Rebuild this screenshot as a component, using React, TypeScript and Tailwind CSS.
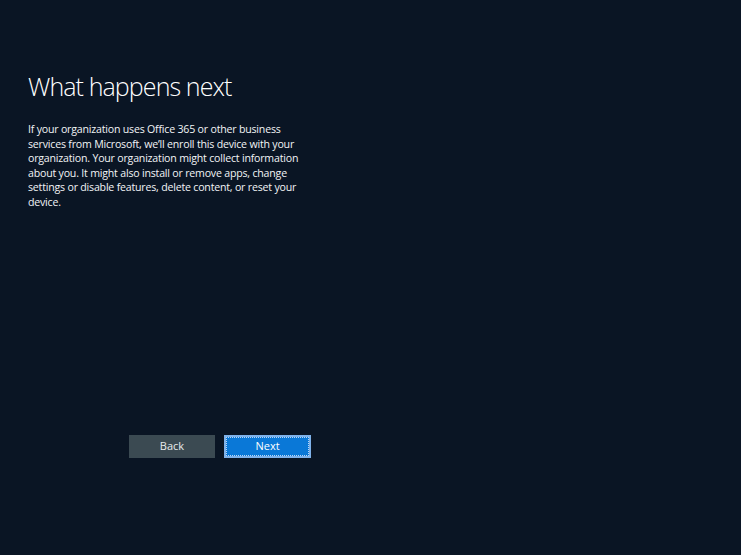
export default function App() {
  return (
    <div
      className="w-[741px] h-[555px] bg-[#0a1524] text-white overflow-hidden flex flex-col"
      style={{ fontFamily: '"Open Sans", "Noto Sans", sans-serif' }}
    >
      <div className="pl-[28px] pt-[68px] w-[330px]">
        <h1 className="text-[25px] font-light leading-[36px] tracking-[-0.9px]">What happens next</h1>
        <p className="mt-[18px] text-[10.6px] leading-[14.6px] tracking-[-0.2px] w-[277px] text-[#f2f4f6]">
          If your organization uses Office 365 or other business services from Microsoft, we’ll enroll this device with your organization. Your organization might collect information about you. It might also install or remove apps, change settings or disable features, delete content, or reset your device.
        </p>
      </div>
      <div className="mt-[225px] pl-[129px] flex gap-[9px]">
        <button className="w-[86px] h-[23px] bg-[#3b4a52] text-[11px] text-[#e8eaec]">Back</button>
        <button className="w-[87px] h-[23px] bg-[#0a78d7] border-2 border-[#7fb2ea] outline-1 outline-dotted outline-[#b9d6f5] -outline-offset-[3px] text-[11px] text-white">
          Next
        </button>
      </div>
    </div>
  );
}
